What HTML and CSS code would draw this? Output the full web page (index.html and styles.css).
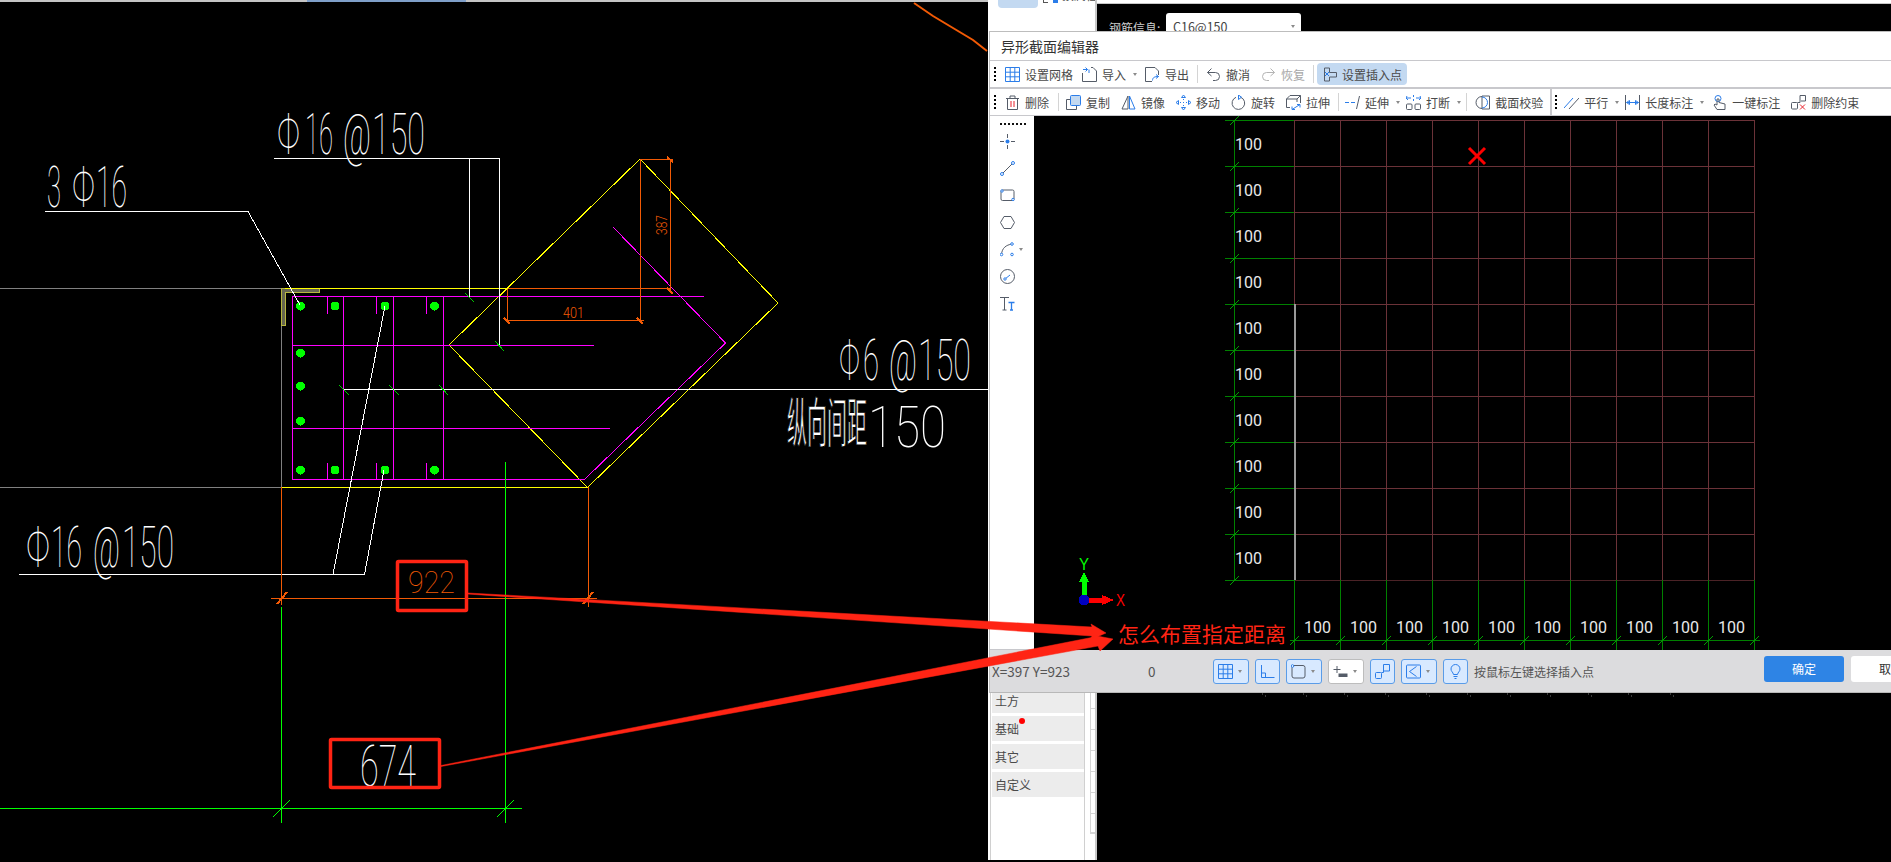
FILE: index.html
```html
<!DOCTYPE html>
<html lang="zh-CN">
<head>
<meta charset="utf-8">
<title>异形截面编辑器</title>
<link rel="stylesheet" href="styles.css">
</head>
<body>
<div class="desk">
  <section class="cad">
    <svg class="cad-svg" viewBox="0 0 988 862" width="988" height="862">
      <rect class="strip" x="0" y="0" width="988" height="2"/>
      <rect class="strip-blue" x="307" y="0" width="159" height="2"/>
      <path class="l-gray" d="M0 288.5H281.5V487.5M0 487.5H281.5"/>
      <path class="hatch" d="M281.5 288.5H319.5V292.5H285.5V325.5H281.5Z"/>
      <path class="l-yellow" d="M285 288.5H507.5M281.5 487.5H587.5L778 303 640 159 449 345 587.5 487.5"/>
      <path class="l-mag" d="M703.5 296.5H292.5V479.5H584.5L725.5 343 613 227M292.5 345.5H594M292.5 428.5H609.5M343.5 296.5V479.5M393.5 296.5V479.5M443.5 296.5V479.5M327.5 296.5V314M376.5 296.5V314M426.5 296.5V314M327.5 463V479M376.5 463V479M426.5 463V479"/>
      <g class="dots">
        <circle cx="300.5" cy="306" r="4.5"/><circle cx="335" cy="306" r="4.5"/><circle cx="385" cy="306" r="4.5"/><circle cx="434.5" cy="306" r="4.5"/>
        <circle cx="300.5" cy="353" r="4.5"/><circle cx="300.5" cy="386" r="4.5"/><circle cx="300.5" cy="421" r="4.5"/>
        <circle cx="300.5" cy="470" r="4.5"/><circle cx="335" cy="470" r="4.5"/><circle cx="385" cy="470" r="4.5"/><circle cx="434.5" cy="470" r="4.5"/>
      </g>
      <path class="l-white" d="M274 158.5H499.5V345.5M469.5 158.5V297M45 211.5H248L300 305M343.5 389.5H988M385 306L333 574.5M384 470L364.5 574.5M19 574.5H364.5"/>
      <path class="l-tick" d="M465 293L474 302M495 341L504 351M339 385L349 395M389 385L399 395M439 385L448 395"/>
      <path class="l-orange" d="M507.5 288.5H670.5M670.5 159.5V291M640 159.5H673M507.5 288.5V322M505 320.5H644M640.5 159V323M281.5 487V605M588.5 487V607M271 598.5H597"/>
      <path class="l-orange-tick" d="M667 157L673 162M667 288L673 294M504 318L510 324M637 318L643 324M277 604L287 592M583 604L593 592"/>
      <path class="l-green" d="M281.5 607V823M505.5 462V823M0 808.5H521.5M273 817L290 800M497 817L514 800"/>
      <text class="shx" x="277" y="154" textLength="23" lengthAdjust="spacingAndGlyphs">Φ</text>
      <text class="shx" x="305" y="154" textLength="28" lengthAdjust="spacingAndGlyphs">16</text>
      <text class="shx" x="343" y="154" textLength="28" lengthAdjust="spacingAndGlyphs">@</text>
      <text class="shx" x="372" y="154" textLength="53" lengthAdjust="spacingAndGlyphs">150</text>
      <text class="shx" x="47" y="207" textLength="14" lengthAdjust="spacingAndGlyphs">3</text>
      <text class="shx" x="72" y="207" textLength="23" lengthAdjust="spacingAndGlyphs">Φ</text>
      <text class="shx" x="96" y="207" textLength="31" lengthAdjust="spacingAndGlyphs">16</text>
      <text class="shx" x="26" y="567" textLength="24" lengthAdjust="spacingAndGlyphs">Φ</text>
      <text class="shx" x="51" y="567" textLength="31" lengthAdjust="spacingAndGlyphs">16</text>
      <text class="shx" x="93" y="567" textLength="27" lengthAdjust="spacingAndGlyphs">@</text>
      <text class="shx" x="122" y="567" textLength="52" lengthAdjust="spacingAndGlyphs">150</text>
      <text class="shx" x="839" y="380" textLength="21" lengthAdjust="spacingAndGlyphs">Φ</text>
      <text class="shx" x="863" y="380" textLength="16" lengthAdjust="spacingAndGlyphs">6</text>
      <text class="shx" x="889" y="380" textLength="28" lengthAdjust="spacingAndGlyphs">@</text>
      <text class="shx" x="918" y="380" textLength="53" lengthAdjust="spacingAndGlyphs">150</text>
      <text class="shx-cjk" x="787" y="443" textLength="80" lengthAdjust="spacingAndGlyphs">纵向间距</text>
      <text class="shx" x="868" y="447" textLength="78" lengthAdjust="spacingAndGlyphs">150</text>
      <text class="shx" x="360" y="786" textLength="56" lengthAdjust="spacingAndGlyphs">674</text>
      <text class="shx-o" x="408" y="593" textLength="47" lengthAdjust="spacingAndGlyphs">922</text>
      <text class="shx-o small" x="563" y="318" textLength="21" lengthAdjust="spacingAndGlyphs">401</text>
      <text class="shx-o small" transform="translate(667 235) rotate(-90)" textLength="20" lengthAdjust="spacingAndGlyphs">387</text>
      <path class="l-curve" d="M914 3L933 16 973 40 987 51"/>
    </svg>
  </section>

  <section class="app">
    <aside class="side">
      <div class="crumb"><span class="crumb-btn"></span><span class="crumb-ic"></span><span class="crumb-ic blue"></span><span class="crumb-text">按属性</span></div>
      <div class="side-body">
        <ul class="cats">
          <li class="cat">土方</li>
          <li class="cat">基础<span class="red-dot"></span></li>
          <li class="cat">其它</li>
          <li class="cat">自定义</li>
        </ul>
        <div class="rail"></div>
      </div>
    </aside>
    <main class="back">
      <div class="field">
        <span class="field-label">钢筋信息:</span>
        <span class="select">C16@150<i class="caret"></i></span>
      </div>
      <svg class="back-ticks" width="430" height="6" viewBox="1260 693 430 6">
        <path d="M1262 694h1M1265 696h1M1303 694h1M1306 696h1M1344 694h1M1347 696h1M1385 694h1M1388 696h1M1426 694h1M1429 696h1M1467 694h1M1470 696h1M1507 694h1M1510 696h1M1547 694h1M1550 696h1M1588 694h1M1591 696h1M1628 694h1M1631 696h1M1670 694h1M1673 696h1"/>
      </svg>
    </main>
  </section>

  <div class="dialog">
    <header class="title">异形截面编辑器</header>

    <div class="bar">
      <span class="grip"></span>
      <span class="tb ml9"><svg class="ic" viewBox="0 0 15 15"><path class="b" d="M.5.5h14v14H.5zM5.2.5v14M9.8.5v14M.5 5.2h14M.5 9.8h14"/></svg>设置网格</span>
      <span class="tb ml9"><svg class="ic" viewBox="0 0 15 15"><path d="M.5 6v8.500h14V4L11 .5H9"/><path class="b" d="M1 2.500h4.500M5.500 2.500L3.500.5M5.500 2.500L3.500 4.500M7 2.500V6"/></svg>导入</span>
      <i class="caret ml7"></i>
      <span class="tb ml8"><svg class="ic" viewBox="0 0 15 15"><path d="M7 14.500H.5V.5H10l3.500 3.500v4"/><path class="b" d="M7.500 13.500c0-3 2-4 6-4M13.500 9.500l-2.500-2M13.500 9.500l-2.500 2"/></svg>导出</span>
      <span class="sep ml8"></span>
      <span class="tb ml8"><svg class="ic" viewBox="0 0 15 15"><path d="M1.500 5.500h8a4 4 0 0 1 0 8H7M1.500 5.500l4-4M1.500 5.500l4 3.500"/></svg>撤消</span>
      <span class="tb ml11 off"><svg class="ic" viewBox="0 0 15 15"><path class="faint" d="M13.500 5.500h-8a4 4 0 0 0 0 8H8M13.500 5.500l-4-4M13.500 5.500l-4 3.500"/></svg>恢复</span>
      <span class="sep ml8"></span>
      <span class="tb active ml3"><svg class="ic" viewBox="0 0 15 15"><path d="M1.500 1v13h5v-4h7V5.500h-7V1z"/><path class="b" d="M2 5l4 4M6 5l-4 4"/></svg>设置插入点</span>
    </div>
    <div class="band"></div>
    <div class="bar">
      <span class="grip"></span>
      <span class="tb ml9"><svg class="ic" viewBox="0 0 15 15"><path d="M2.500 3.500v11h10v-11M1 3.500h13M5 3.500V1h5v2.500"/><path class="r" d="M6 6v6M9 6v6"/></svg>删除</span>
      <span class="sep ml9"></span>
      <span class="tb ml7"><svg class="ic" viewBox="0 0 15 15"><path d="M4 4.500H.5v10h10V11"/><rect class="bfill" x="4.500" y=".5" width="10" height="10" rx="1"/></svg>复制</span>
      <span class="tb ml11"><svg class="ic" viewBox="0 0 15 15"><path d="M7 1L1 14h6z"/><path class="b" d="M8.500 1L14 14H8.500z"/></svg>镜像</span>
      <span class="tb ml11"><svg class="ic" viewBox="0 0 15 15"><path class="b" d="M7.500 0L5.500 2.500h4zM7.500 15l-2-2.500h4zM0 7.500l2.500-2v4zM15 7.500l-2.500-2v4zM7.500 4v1M7.500 7v1M7.500 10v1M4 7.500h1M10 7.500h1"/></svg>移动</span>
      <span class="tb ml11"><svg class="ic" viewBox="0 0 15 15"><path d="M9.500 2.200A6.300 6.300 0 1 1 5 2.300"/><path class="b" d="M7.500 0v4.500L10.500 2.200z"/></svg>旋转</span>
      <span class="tb ml11"><svg class="ic" viewBox="0 0 15 15"><path d="M4 12.500H.5V4L4 .5h10.500V8M.5 4H11v3M11 4l3.500-3.500"/><path class="b" d="M6 14.500l8-5M6 14.500h3M6 14.500v-3M14 9.500h-3M14 9.500v3"/></svg>拉伸</span>
      <span class="sep ml8"></span>
      <span class="tb ml6"><svg class="ic" viewBox="0 0 15 15"><path class="b" d="M0 7.500h4M6 7.500h4"/><path d="M14.500 1L11.500 14"/></svg>延伸</span>
      <i class="caret ml7"></i>
      <span class="tb ml6"><svg class="ic" viewBox="0 0 15 15"><rect x=".5" y="9" width="5.500" height="5.500" rx="1"/><rect x="9" y="9" width="5.500" height="5.500" rx="1"/><path class="b" d="M0 3h5M10 3h5M1 1L0 3l2 2M14 1l1 2-2 2M7.500 0v2M7.500 4v2"/></svg>打断</span>
      <i class="caret ml7"></i>
      <span class="sep ml5"></span>
      <span class="tb ml8"><svg class="ic" viewBox="0 0 15 15"><path d="M7 1.500a6 6 0 0 0 0 12M7 1h7.500v13H7z"/><path class="b" d="M7 2a5.500 5.500 0 0 1 0 11"/></svg>截面校验</span>
      <span class="thick ml7"></span>
      <span class="grip ml3"></span>
      <span class="tb ml7"><svg class="ic" viewBox="0 0 15 15"><path class="b" d="M0 13L9 3"/><path d="M5 14L15 3"/></svg>平行</span>
      <i class="caret ml7"></i>
      <span class="tb ml6"><svg class="ic" viewBox="0 0 15 15"><path d="M.5 0v15M14.500 0v15"/><path class="b" d="M1.500 7.500h12M1.500 7.500l3-2v4zM13.500 7.500l-3-2v4z"/></svg>长度标注</span>
      <i class="caret ml7"></i>
      <span class="tb ml8"><svg class="ic" viewBox="0 0 15 15"><circle class="b" cx="6" cy="3.500" r="3"/><path d="M5 4v6L3 9 2 10l3 4.500h8V9L7 7.500V4z"/></svg>一键标注</span>
      <span class="tb ml11"><svg class="ic" viewBox="0 0 15 15"><rect x=".5" y="7.500" width="6" height="6.500" rx="1"/><path d="M6.500 7.500H9V.5h5.500V6H10"/><path class="r" d="M9 9.500l5 5M14 9.500l-5 5"/></svg>删除约束</span>
    </div>
    <div class="band-thin"></div>

    <div class="work">
      <nav class="tools">
        <span class="dotted"></span>
        <svg class="ic tool" viewBox="0 0 15 15"><path d="M7.500 0v4M7.500 11v4M0 7.500h4M11 7.500h4"/><circle class="bsolid" cx="7.500" cy="7.500" r="2"/></svg>
        <svg class="ic tool" viewBox="0 0 15 15"><path d="M2.500 12.500l10-10"/><circle class="bdot" cx="2" cy="13" r="1.500"/><circle class="bdot" cx="13" cy="2" r="1.500"/></svg>
        <svg class="ic tool" viewBox="0 0 15 15"><rect x="1" y="2" width="13" height="10.500" rx="1.500"/><circle class="bdot" cx="2" cy="3" r="1.200"/><circle class="bdot" cx="13" cy="11.500" r="1.200"/></svg>
        <svg class="ic tool" viewBox="0 0 15 15"><path d="M4 1.500h7l3.500 6-3.500 6H4L.5 7.500z"/></svg>
        <span class="tool-arc"><svg class="ic tool" viewBox="0 0 15 15"><path d="M1.500 12.500C2 6 6 3 12 2"/><circle class="bdot" cx="1.500" cy="12.500" r="1.300"/><circle class="bdot" cx="12" cy="2" r="1.300"/><circle class="bdot" cx="12" cy="12.500" r="1.300"/></svg><i class="caret"></i></span>
        <svg class="ic tool" viewBox="0 0 15 15"><circle cx="7.500" cy="7.500" r="7"/><path class="b" d="M5 10l5-4"/><circle class="bdot" cx="5" cy="10" r="1.200"/></svg>
        <svg class="ic tool" viewBox="0 0 15 15"><path d="M0 1.500h9M4.500 1.500V14M2.500 14h4"/><path class="b thickb" d="M8.500 6.500h6M11.500 6.500V14M10 14h3"/></svg>
      </nav>
      <svg class="grid" viewBox="1034 116 857 534" width="857" height="534">
        <path class="g-maroon" d="M1294.5 120.500H1754.500M1294.500 166.500H1754.500M1294.500 212.500H1754.500M1294.500 258.500H1754.500M1294.500 304.500H1754.500M1294.500 350.500H1754.500M1294.500 396.500H1754.500M1294.500 442.500H1754.500M1294.500 488.500H1754.500M1294.500 534.500H1754.500M1294.500 120V304M1340.500 120V580M1386.500 120V580M1432.500 120V580M1478.500 120V580M1524.500 120V580M1570.500 120V580M1616.500 120V580M1662.500 120V580M1708.500 120V580M1754.500 120V580"/>
        <path class="g-dim" d="M1294.500 580.500H1754.500"/>
        <path class="g-gray" d="M1294.500 304V580"/>
        <path class="g-green" d="M1234.500 120V580M1225 120.500H1294M1225 166.500H1294M1225 212.500H1294M1225 258.500H1294M1225 304.500H1294M1225 350.500H1294M1225 396.500H1294M1225 442.500H1294M1225 488.500H1294M1225 534.500H1294M1225 580.500H1294M1290 640.500H1760M1294.500 580V650M1340.500 580V650M1386.500 580V650M1432.500 580V650M1478.500 580V650M1524.500 580V650M1570.500 580V650M1616.500 580V650M1662.500 580V650M1708.500 580V650M1754.500 580V650"/>
        <path class="g-slash" d="M1230 125l9-9M1230 171l9-9M1230 217l9-9M1230 263l9-9M1230 309l9-9M1230 355l9-9M1230 401l9-9M1230 447l9-9M1230 493l9-9M1230 539l9-9M1230 585l9-9M1290 645l9-9M1336 645l9-9M1382 645l9-9M1428 645l9-9M1474 645l9-9M1520 645l9-9M1566 645l9-9M1612 645l9-9M1658 645l9-9M1704 645l9-9M1750 645l9-9"/>
        <path class="g-x" d="M1469 148l16 16M1485 148l-16 16"/>
        <g class="dim-text">
          <text x="1235" y="150">100</text><text x="1235" y="196">100</text><text x="1235" y="242">100</text><text x="1235" y="288">100</text><text x="1235" y="334">100</text><text x="1235" y="380">100</text><text x="1235" y="426">100</text><text x="1235" y="472">100</text><text x="1235" y="518">100</text><text x="1235" y="564">100</text>
          <text x="1304" y="633">100</text><text x="1350" y="633">100</text><text x="1396" y="633">100</text><text x="1442" y="633">100</text><text x="1488" y="633">100</text><text x="1534" y="633">100</text><text x="1580" y="633">100</text><text x="1626" y="633">100</text><text x="1672" y="633">100</text><text x="1718" y="633">100</text>
        </g>
        <path class="ax-y" d="M1084 600V580"/>
        <path class="ax-yh" d="M1084 572L1079 582H1089Z"/>
        <path class="ax-x" d="M1084 600H1104"/>
        <path class="ax-xh" d="M1114 600L1102 595V605Z"/>
        <circle class="ax-o" cx="1084" cy="600" r="5.500"/>
        <text class="ax-ly" x="1079" y="570" textLength="10" lengthAdjust="spacingAndGlyphs">Y</text>
        <text class="ax-lx" x="1116" y="606" textLength="9" lengthAdjust="spacingAndGlyphs">X</text>
      </svg>
    </div>

    <footer class="status">
      <span class="coords">X=397 Y=923</span>
      <span class="zero">0</span>
      <span class="sb wide"><svg class="ic" viewBox="0 0 15 15"><path class="b" d="M.5.5h14v14H.5zM5.200.5v14M9.800.5v14M.5 5.200h14M.5 9.800h14"/></svg><i class="caret"></i></span>
      <span class="sb"><svg class="ic" viewBox="0 0 15 15"><path class="b" d="M1.500 1v12.500h13M1.500 9h4v4.500"/></svg></span>
      <span class="sb wide"><svg class="ic" viewBox="0 0 15 15"><rect x="1" y="1.500" width="13" height="12.500" rx="2"/><circle class="bdot" cx="1.500" cy="2" r="1.300"/></svg><i class="caret"></i></span>
      <span class="sb wide plain"><svg class="ic" viewBox="0 0 15 15"><path d="M4 2v7M.5 5.500h7"/><path class="dark-fill" d="M5.500 9.500h9v3.500h-9z"/></svg><i class="caret"></i></span>
      <span class="sb"><svg class="ic" viewBox="0 0 15 15"><rect class="b" x=".5" y="8.500" width="6" height="6" rx="1"/><path class="b" d="M6.500 8.500h2V.5h6V7H8.500"/></svg></span>
      <span class="sb wide"><svg class="ic" viewBox="0 0 15 15"><rect class="b" x=".5" y="1" width="14" height="13" rx="1"/><path class="b" d="M3.500 7.500l7-5M3.500 7.500l7 5"/></svg><i class="caret"></i></span>
      <span class="sb"><svg class="ic" viewBox="0 0 15 15"><path class="b" d="M5.500 10.500C5 8 3 7.500 3 5a4.500 4.500 0 0 1 9 0c0 2.500-2 3-2.500 5.500zM5.500 12.500h4M6.500 14.500h2"/></svg></span>
      <span class="hint">按鼠标左键选择插入点</span>
      <button class="ok">确定</button>
      <button class="cancel">取消</button>
    </footer>
  </div>

  <svg class="notes" viewBox="0 0 1891 862" width="1891" height="862">
    <rect class="box" x="397.500" y="561.500" width="69" height="49" rx="1"/>
    <rect class="box" x="330.500" y="739.500" width="109" height="48" rx="1"/>
    <path class="arrow" d="M468 593L1092 627 1091 624 1106 633 1090 640 1092 636 467 594Z"/>
    <path class="arrow" d="M441 765.500L1094 637 1092 635 1113 639 1100 651 1098 646 441 766.500Z"/>
    <text class="note" x="1118" y="642">怎么布置指定距离</text>
  </svg>
</div>
</body>
</html>
```
FILE: styles.css
```css
* { box-sizing: border-box; }
html, body { margin: 0; padding: 0; }
body {
  width: 1891px;
  height: 862px;
  overflow: hidden;
  background: #000;
  font-family: "Noto Sans CJK SC", "Noto Sans", sans-serif;
  font-size: 12px;
  color: #4a4a4a;
}
.desk { position: relative; display: flex; width: 1891px; height: 862px; overflow: hidden; }

/* CAD drawing */
.cad { flex: none; width: 988px; height: 862px; }
.cad-svg { display: block; shape-rendering: crispEdges; }
.cad-svg path { fill: none; stroke-width: 1; }
.strip { fill: #c4c4c4; }
.strip-blue { fill: #7f9fc9; }
.cad-svg .l-gray { stroke: #808080; }
.cad-svg .hatch { fill: #666650; stroke: #b8b840; }
.cad-svg .l-yellow { stroke: #ffff00; }
.cad-svg .l-mag { stroke: #ff00ff; }
.dots circle { fill: #00ff00; }
.cad-svg .l-white { stroke: #ffffff; }
.cad-svg .l-tick { stroke: #00c800; }
.cad-svg .l-orange { stroke: #f25a05; }
.cad-svg .l-orange-tick { stroke: #f25a05; stroke-width: 2; }
.cad-svg .l-green { stroke: #00ff00; }
.cad-svg .l-curve { stroke: #f25a05; stroke-width: 2; shape-rendering: auto; }
.shx, .shx-o { font-family: Roboto, "Liberation Sans", sans-serif; font-weight: 100; font-size: 58px; fill: #fff; }
.shx-o { fill: #f25a05; font-size: 31px; }
.shx-o.small { font-size: 15px; font-weight: 300; }
.shx-cjk {
  font-family: "Noto Sans CJK SC", sans-serif;
  font-size: 54px;
  fill: #fff;
  stroke: #000;
  stroke-width: 1.2px;
}

/* Window behind the dialog */
.app { flex: none; display: flex; width: 903px; height: 860px; background: #fff; }
.side { flex: none; width: 109px; display: flex; flex-direction: column; border-right: 2px solid #c8c8c8; }
.crumb { display: flex; height: 688px; padding-left: 10px; overflow: hidden; align-items: flex-start; white-space: nowrap; }
.crumb-btn { flex: none; width: 40px; height: 8px; background: #c3d9f1; border-radius: 0 0 4px 4px; }
.crumb-ic { flex: none; width: 5px; height: 3px; margin-left: 5px; border-left: 1px solid #555; border-bottom: 1px solid #555; }
.crumb-ic.blue { background: #2b7de9; border: 0; }
.crumb-text { flex: none; margin: -14px 0 0 4px; font-size: 12px; line-height: 18px; }
.side-body { flex: 1; display: flex; padding-left: 2px; }
.cats { list-style: none; margin: 0; padding: 0 0 0 1px; width: 96px; border-left: 1px solid #d0d0d0; border-right: 1px solid #d0d0d0; display: flex; flex-direction: column; gap: 3px; }
.cat { position: relative; height: 25px; line-height: 25px; padding-left: 3px; background: #ececec; }
.red-dot { position: absolute; left: 27px; top: 2px; width: 6px; height: 6px; border-radius: 50%; background: #f00; }
.rail {
  width: 5px;
  height: 146px;
  margin-left: 5px;
  border-left: 1px solid #d4d4d4;
  border-bottom: 2px solid #d4d4d4;
  background: repeating-linear-gradient(#fff 0 20px, #d4d4d4 20px 21px);
}
.back { position: relative; flex: 1; margin-top: 3px; border-top: 1px solid #c8c8c8; background: #000; height: 857px; }
.field { display: flex; align-items: flex-start; padding: 9px 0 0 12px; height: 40px; }
.field-label { margin-top: 6px; width: 57px; color: #cfcfcf; line-height: 18px; }
.select { position: relative; width: 135px; height: 30px; padding: 5px 0 0 7px; background: #fff; border-radius: 3px; font-size: 12.500px; line-height: 18px; color: #444; }
.select .caret { position: absolute; right: 6px; top: 12px; }
.back-ticks { position: absolute; left: 163px; top: 689px; }
.back-ticks path { stroke: #777; fill: none; }

/* Dialog */
.dialog {
  position: absolute;
  left: 989px;
  top: 31px;
  width: 902px;
  height: 662px;
  display: flex;
  flex-direction: column;
  background: #fff;
  border: 1px solid #bdbdbd;
  border-right: 0;
  border-bottom: 0;
  overflow: hidden;
}
.title { flex: none; height: 28px; padding: 0 0 0 11px; font-size: 14px; line-height: 28px; color: #333; }
.bar { flex: none; display: flex; align-items: center; height: 26px; white-space: nowrap; }
.title + .bar { border-top: 1px solid #c8c8cc; height: 27px; }
.band { flex: none; height: 2px; background: #c8c8cc; }
.band-thin { flex: none; height: 1px; background: #c8c8cc; }
.grip { flex: none; width: 2px; height: 14px; margin-left: 4px; background: repeating-linear-gradient(#000 0 2px, transparent 2px 4px); }
.tb { flex: none; display: flex; align-items: center; gap: 5px; }
.off { color: #a8a8a8; }
.active { width: 90px; height: 22px; padding-left: 6px; gap: 4px; background: #c3d9f1; border-radius: 4px; }
.sep { flex: none; width: 1px; height: 18px; background: #d4d4d4; }
.thick { flex: none; width: 2px; height: 26px; background: #c8c8cc; }
.caret { flex: none; display: inline-block; width: 0; height: 0; border-left: 2.500px solid transparent; border-right: 2.500px solid transparent; border-top: 3px solid #8a8a8a; }
.ml3 { margin-left: 3px; } .ml5 { margin-left: 5px; } .ml6 { margin-left: 6px; } .ml7 { margin-left: 7px; }
.ml8 { margin-left: 8px; } .ml9 { margin-left: 9px; } .ml11 { margin-left: 11px; }

/* Icons */
.ic { flex: none; display: block; width: 15px; height: 15px; fill: none; stroke: #555c68; stroke-width: 1; }
.ic .b { stroke: #2b7de9; }
.ic .r { stroke: #e8202a; }
.ic .faint { stroke: #b4b4b4; }
.ic .bfill { fill: #c3d9f1; stroke: #2b7de9; }
.ic .bsolid { fill: #2b7de9; stroke: none; }
.ic .bdot { fill: #fff; stroke: #2b7de9; }
.ic .thickb { stroke-width: 1.300; }
.ic .dark-fill { fill: #555c68; stroke: none; }

/* Work area */
.work { flex: none; display: flex; height: 534px; }
.tools { flex: none; width: 44px; display: flex; flex-direction: column; align-items: flex-start; padding: 7px 0 0 10px; gap: 12px; border-bottom: 1px solid #c8c8cc; }
.dotted { width: 26px; height: 2px; margin-bottom: -3px; background: repeating-linear-gradient(90deg, #111 0 2px, transparent 2px 4px); }
.tool-arc { display: flex; align-items: center; gap: 4px; width: 28px; }
.grid { flex: none; display: block; background: #000; shape-rendering: crispEdges; }
.grid path { fill: none; stroke-width: 1; }
.grid .g-maroon { stroke: #6b3238; }
.grid .g-dim { stroke: #4b2226; }
.grid .g-gray { stroke: #999999; stroke-width: 2; }
.grid .g-green { stroke: #008000; }
.grid .g-slash { stroke: #00a000; shape-rendering: auto; }
.grid .g-x { stroke: #ff0000; stroke-width: 3; shape-rendering: auto; }
.dim-text text { font-family: Roboto, "Noto Sans", sans-serif; font-size: 16px; fill: #e8e8e8; }
.grid .ax-y { stroke: #00ff00; stroke-width: 5; }
.grid .ax-yh { fill: #00ff00; }
.grid .ax-x { stroke: #ff0000; stroke-width: 5; }
.grid .ax-xh { fill: #ff0000; }
.ax-o { fill: #0000c0; }
.ax-ly, .ax-lx { font-family: "Liberation Sans", sans-serif; font-size: 17px; }
.ax-ly { fill: #00ff00; }
.ax-lx { fill: #ff0000; }

/* Status bar */
.status { flex: none; display: flex; align-items: center; gap: 6px; height: 43px; padding-left: 2px; background: #dcdcde; border-bottom: 1px solid #b8b8b8; white-space: nowrap; }
.coords { flex: none; width: 150px; font-size: 13.500px; color: #555; }
.zero { flex: none; width: 59px; font-size: 13.500px; color: #555; }
.sb { flex: none; display: flex; align-items: center; gap: 5px; width: 25px; height: 25px; padding-left: 4px; background: #d8e9ff; border: 1px solid #5a9ce8; border-radius: 3px; }
.sb.wide { width: 36px; }
.sb.plain { background: #fff; border-color: #bdbdbd; }
.hint { flex: none; width: 120px; color: #555; }
.ok, .cancel { flex: none; height: 26px; margin-top: -5px; padding: 0; border: 0; border-radius: 3px; font: inherit; }
.ok { width: 80px; margin-left: 164px; background: #2e84e5; color: #fff; }
.cancel { width: 80px; margin-left: 1px; background: #fff; color: #333; }

/* Red annotations over everything */
.notes { position: absolute; left: 0; top: 0; pointer-events: none; }
.box { fill: none; stroke: #ff2414; stroke-width: 3.500; }
.arrow { fill: #ff2414; stroke: #ff2414; stroke-width: .5; }
.note { font-family: "Noto Sans CJK SC", sans-serif; font-size: 21px; fill: #ff2414; }
```
